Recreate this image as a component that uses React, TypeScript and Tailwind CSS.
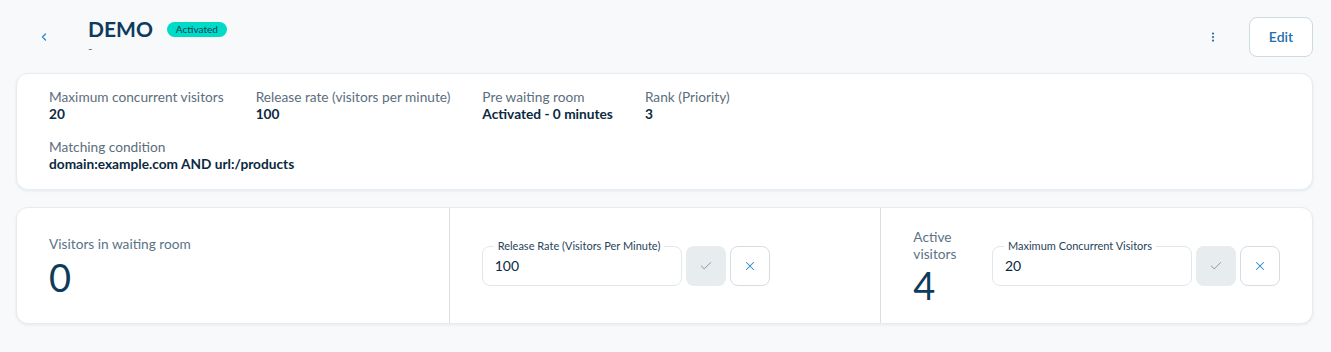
import React from 'react';
import { ChevronLeft, EllipsisVertical, Check, X } from 'lucide-react';

const details = [
  { label: 'Maximum concurrent visitors', value: '20' },
  { label: 'Release rate (visitors per minute)', value: '100' },
  { label: 'Pre waiting room', value: 'Activated - 0 minutes' },
  { label: 'Rank (Priority)', value: '3' },
];

const LimitInput: React.FC<{ label: string; value: string }> = ({ label, value }) => (
  <div className="flex items-center gap-1">
    <div className="relative w-[200px] h-10 rounded-lg border border-[#e2e7eb] bg-white">
      <span className="absolute -top-[8px] left-[11px] bg-white px-1 text-[11px] leading-[14px] text-[#27445a]">{label}</span>
      <input
        className="w-full h-full bg-transparent px-[12px] text-sm text-[#0b2a3f] outline-none"
        defaultValue={value}
      />
    </div>
    <button className="w-10 h-10 rounded-lg bg-[#e7ecef] flex items-center justify-center text-[#7b8c99]">
      <Check size={14} strokeWidth={1.5} />
    </button>
    <button className="w-10 h-10 rounded-lg border border-[#d5dde3] bg-white flex items-center justify-center text-[#2b86c8]">
      <X size={14} strokeWidth={1.75} />
    </button>
  </div>
);

export default function App() {
  return (
    <div className="min-h-[352px] bg-[#f7f9fb] pl-4 pr-[18px] pt-[17px] pb-6 font-['Lato',sans-serif] text-[#0b2a3f]">
      {/* Header */}
      <div className="flex items-start justify-between h-10">
        <div className="flex items-start">
          <button className="w-[56px] h-10 flex items-center justify-center text-[#2b86c8]">
            <ChevronLeft size={12} strokeWidth={2.5} />
          </button>
          <div className="ml-4 flex flex-col">
            <div className="flex items-center gap-[14px]">
              <h1 className="text-[21px] leading-[24px] font-bold text-[#0d3b5c]">DEMO</h1>
              <span className="rounded-full bg-[#00dbc6] px-[9px] text-[10px] leading-[15px] text-[#0d3b5c]">Activated</span>
            </div>
            <span className="text-xs leading-4 text-[#5d6f7e]">-</span>
          </div>
        </div>
        <div className="flex items-center gap-6">
          <button className="w-6 h-10 flex items-center justify-center text-[#2b6fa8]">
            <EllipsisVertical size={12} strokeWidth={2.5} />
          </button>
          <button className="h-10 w-[64px] rounded-lg border border-[#cfd9e0] bg-white text-sm font-semibold text-[#1d6fae]">
            Edit
          </button>
        </div>
      </div>

      {/* Details card */}
      <div className="mt-[16px] rounded-xl bg-white border border-[#e8ecef] shadow-[0_1px_3px_rgba(16,40,60,0.08)] px-8 pt-[14px] pb-[17px]">
        <div className="flex gap-8">
          {details.map((d) => (
            <div key={d.label} className="flex flex-col">
              <span className="text-[13.7px] leading-[17px] text-[#5b6e7d]">{d.label}</span>
              <span className="text-[13.7px] leading-[17px] font-bold text-[#0b2a3f]">{d.value}</span>
            </div>
          ))}
        </div>
        <div className="mt-[16px] flex flex-col">
          <span className="text-[13.7px] leading-[17px] text-[#5b6e7d]">Matching condition</span>
          <span className="text-[13.7px] leading-[17px] font-bold text-[#0b2a3f]">domain:example.com AND url:/products</span>
        </div>
      </div>

      {/* Live limits card */}
      <div className="mt-[17px] h-[117px] rounded-xl bg-white border border-[#e8ecef] shadow-[0_1px_3px_rgba(16,40,60,0.08)] grid grid-cols-3">
        <div className="px-8 flex flex-col justify-center">
          <span className="text-[13.7px] leading-[17px] text-[#5b7386]">Visitors in waiting room</span>
          <span className="mt-[6px] text-[38px] leading-[38px] font-normal text-[#0d3b5c]">0</span>
        </div>
        <div className="px-8 flex items-center border-l border-[#d7dfe5]">
          <LimitInput label="Release Rate (Visitors Per Minute)" value="100" />
        </div>
        <div className="px-8 flex items-center border-l border-[#d7dfe5]">
          <div className="w-[64px] mr-[15px] flex flex-col">
            <span className="text-[13.7px] leading-[17px] text-[#5b7386]">Active visitors</span>
            <span className="mt-[4px] text-[38px] leading-[38px] font-normal text-[#0d3b5c]">4</span>
          </div>
          <LimitInput label="Maximum Concurrent Visitors" value="20" />
        </div>
      </div>
    </div>
  );
}
